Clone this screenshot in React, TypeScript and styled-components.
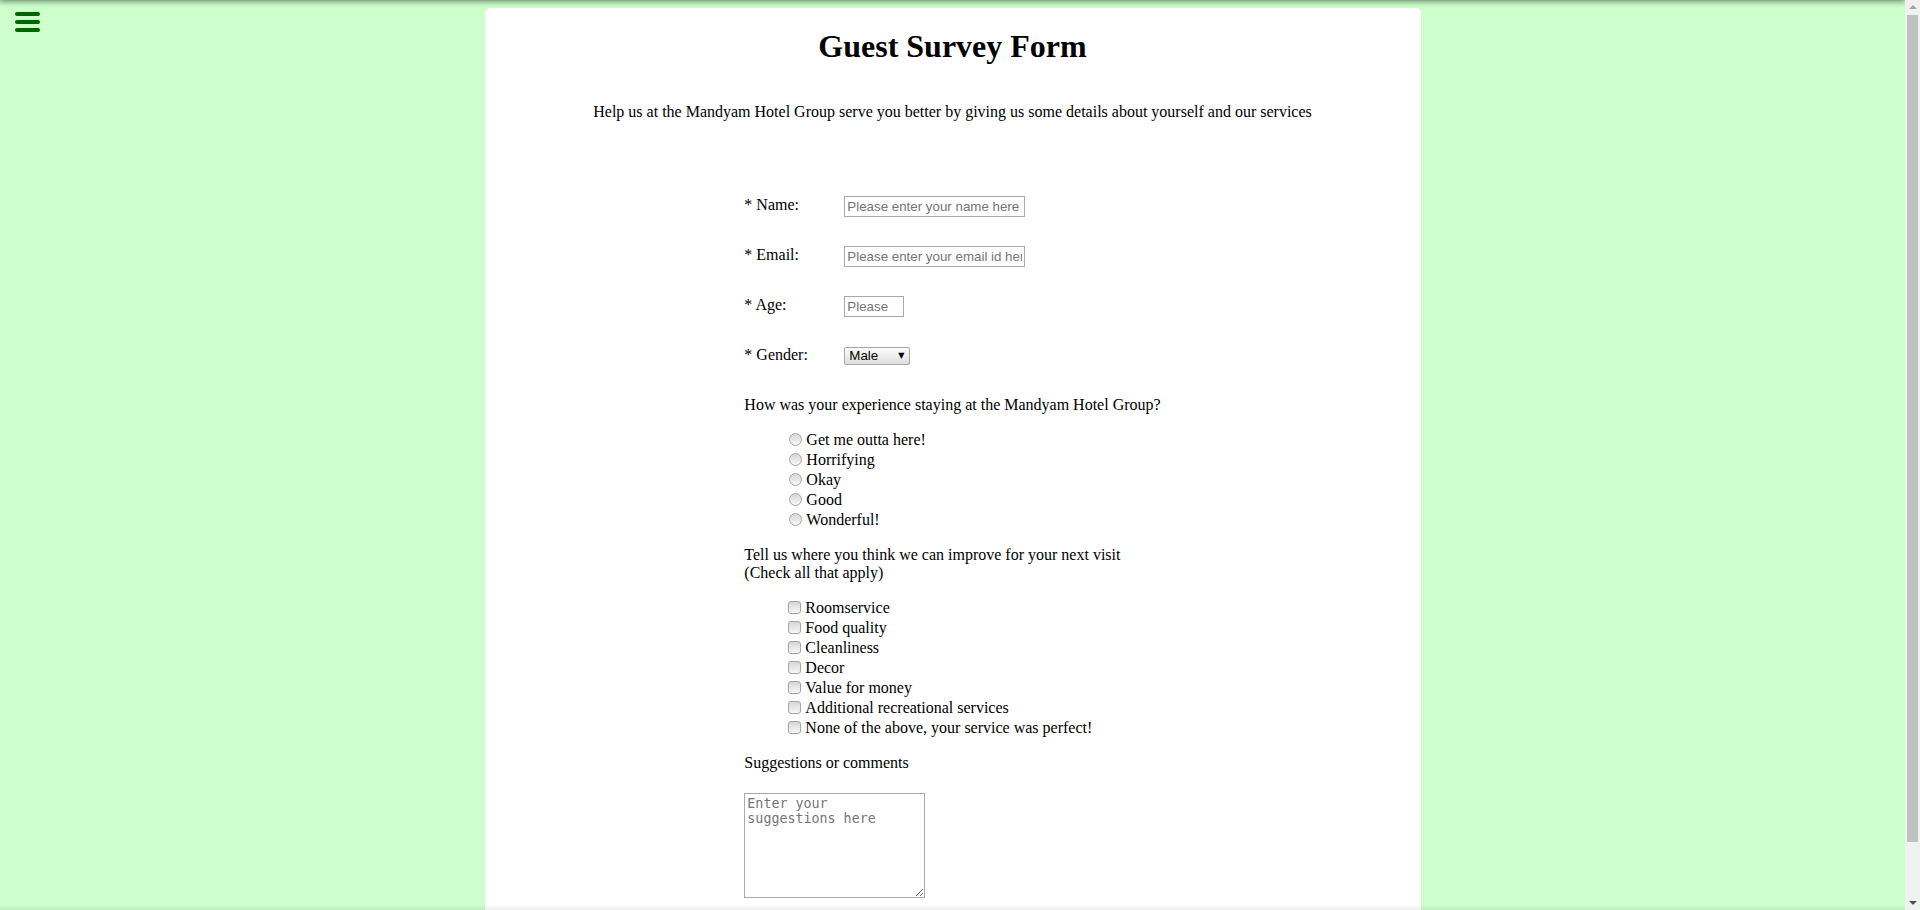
import React from "react";
import styled, { createGlobalStyle } from "styled-components";

const GlobalStyle = createGlobalStyle`
  html, body {
    margin: 0;
    padding: 0;
  }
  body {
    background: #ccffcc;
    font-family: "Liberation Serif", "Times New Roman", serif;
    font-size: 16px;
    color: #000;
  }
`;

const Page = styled.div`
  padding: 8px 0 8px;
  margin-right: 15px;
`;

const TopShade = styled.div`
  position: fixed;
  top: -10px;
  left: 0;
  right: 15px;
  height: 10px;
  box-shadow: 0 0 6px 1px rgba(0, 0, 0, 0.55);
  z-index: 10;
`;

const BottomShade = styled.div`
  position: fixed;
  bottom: 0;
  left: 0;
  right: 15px;
  height: 4px;
  background: linear-gradient(to bottom, rgba(0, 0, 0, 0.02), rgba(0, 0, 0, 0.07));
  z-index: 10;
  pointer-events: none;
`;

const ScrollBar = styled.div`
  position: fixed;
  top: 0;
  right: 0;
  bottom: 0;
  width: 15px;
  background: #f1f1f1;
  display: flex;
  flex-direction: column;
  z-index: 12;
`;

const ScrollButton = styled.div`
  flex: none;
  height: 14px;
  display: flex;
  align-items: center;
  justify-content: center;
`;

const ScrollTrack = styled.div`
  flex: 1;
  padding: 1px 2px;
`;

const ScrollThumb = styled.div`
  height: 827px;
  background: #c1c1c1;
`;

const MenuButton = styled.button`
  position: fixed;
  top: 10px;
  left: 13px;
  padding: 0;
  margin: 0;
  border: none;
  background: transparent;
  cursor: pointer;
  line-height: 0;
  z-index: 11;
`;

const Card = styled.main`
  width: 936px;
  margin: 0 auto;
  background: #fff;
  border-radius: 5px;
  padding: 20px 0 60px;
  box-sizing: border-box;
`;

const Title = styled.h1`
  margin: 0;
  text-align: center;
  font-size: 32px;
  font-weight: bold;
`;

const Subtitle = styled.p`
  margin: 38px 0 0;
  text-align: center;
`;

const Form = styled.form`
  width: fit-content;
  margin: 75px auto 0;
`;

const Field = styled.div`
  display: flex;
  align-items: flex-start;
  height: 50px;
`;

const FieldLabel = styled.label`
  width: 100px;
  flex: none;
`;

const TextInput = styled.input<{ $w: number }>`
  margin: 0;
  width: ${(p) => p.$w}px;
  height: 21px;
  padding: 1px 2px;
  box-sizing: border-box;
  border: 1px solid #a9a9a9;
  border-radius: 0;
  background: #fff;
  font-family: "Liberation Sans", Arial, sans-serif;
  font-size: 13.333px;
  color: #000;
  outline: none;

  &::placeholder {
    color: #757575;
  }
`;

const SelectWrap = styled.span`
  position: relative;
  display: inline-block;
  margin-top: 1px;
  line-height: 0;

  &::after {
    content: "▼";
    position: absolute;
    right: 6px;
    top: 4px;
    font-family: "DejaVu Sans", sans-serif;
    font-size: 8px;
    line-height: 9px;
    color: #000;
    pointer-events: none;
  }
`;

const Select = styled.select`
  appearance: none;
  -webkit-appearance: none;
  width: 66px;
  height: 18px;
  margin: 0;
  padding: 0 0 0 4px;
  box-sizing: border-box;
  border: 1px solid #a6a6a6;
  border-radius: 2px;
  background: linear-gradient(to bottom, #fdfdfd, #dedede);
  font-family: "Liberation Sans", Arial, sans-serif;
  font-size: 13.333px;
  line-height: 16px;
  color: #000;
  outline: none;
`;

const Question = styled.p`
  margin: 0;
`;

const OptionList = styled.ul`
  list-style: none;
  margin: 16px 0;
  padding: 0 0 0 40px;
`;

const OptionItem = styled.li`
  height: 20px;
  line-height: 20px;
  display: flex;
  align-items: center;
`;

const OptionLabel = styled.label`
  display: flex;
  align-items: center;
`;

const Radio = styled.input`
  appearance: none;
  -webkit-appearance: none;
  flex: none;
  width: 13px;
  height: 13px;
  margin: -2px 4px 0 5px;
  box-sizing: border-box;
  border: 1px solid #a4a4a4;
  border-radius: 50%;
  background: linear-gradient(to bottom, #d6d6d6, #f7f7f7);
`;

const Check = styled.input`
  appearance: none;
  -webkit-appearance: none;
  flex: none;
  width: 13px;
  height: 13px;
  margin: -2px 4px 0 4px;
  box-sizing: border-box;
  border: 1px solid #a4a4a4;
  border-radius: 3px;
  background: linear-gradient(to bottom, #d6d6d6, #f7f7f7);
`;

const Comments = styled.textarea`
  display: block;
  margin: 21px 0 0;
  width: 181px;
  height: 105px;
  padding: 2px;
  box-sizing: border-box;
  border: 1px solid #a9a9a9;
  border-radius: 0;
  font-family: "DejaVu Sans Mono", "Liberation Mono", monospace;
  font-size: 13.333px;
  outline: none;

  &::placeholder {
    color: #757575;
  }
`;

const experience = ["Get me outta here!", "Horrifying", "Okay", "Good", "Wonderful!"];
const improvements = [
  "Roomservice",
  "Food quality",
  "Cleanliness",
  "Decor",
  "Value for money",
  "Additional recreational services",
  "None of the above, your service was perfect!",
];

function MenuIcon() {
  return (
    <svg width="29" height="24" viewBox="0 0 29 24" aria-hidden="true">
      <g stroke="#006400" strokeWidth="4" strokeLinecap="round">
        <line x1="4" y1="4" x2="25" y2="4" />
        <line x1="4" y1="12" x2="25" y2="12" />
        <line x1="4" y1="20" x2="25" y2="20" />
      </g>
    </svg>
  );
}

function ArrowIcon({ up, color }: { up: boolean; color: string }) {
  return (
    <svg width="8" height="4" viewBox="0 0 8 4" aria-hidden="true">
      <polygon points={up ? "0,4 8,4 4,0" : "0,0 8,0 4,4"} fill={color} />
    </svg>
  );
}

export default function App() {
  return (
    <>
      <GlobalStyle />
      <TopShade />
      <MenuButton aria-label="Menu">
        <MenuIcon />
      </MenuButton>
      <Page>
        <Card>
          <Title>Guest Survey Form</Title>
          <Subtitle>
            Help us at the Mandyam Hotel Group serve you better by giving us some details about yourself and our services
          </Subtitle>
          <Form onSubmit={(e) => e.preventDefault()}>
            <Field>
              <FieldLabel htmlFor="name">* Name:</FieldLabel>
              <TextInput id="name" type="text" $w={181} placeholder="Please enter your name here" />
            </Field>
            <Field>
              <FieldLabel htmlFor="email">* Email:</FieldLabel>
              <TextInput id="email" type="email" $w={181} placeholder="Please enter your email id here" />
            </Field>
            <Field>
              <FieldLabel htmlFor="age">* Age:</FieldLabel>
              <TextInput id="age" type="text" $w={60} placeholder="Please" />
            </Field>
            <Field>
              <FieldLabel htmlFor="gender">* Gender:</FieldLabel>
              <SelectWrap>
                <Select id="gender" defaultValue="Male">
                  <option>Male</option>
                  <option>Female</option>
                  <option>Other</option>
                </Select>
              </SelectWrap>
            </Field>
            <Question>How was your experience staying at the Mandyam Hotel Group?</Question>
            <OptionList>
              {experience.map((e) => (
                <OptionItem key={e}>
                  <OptionLabel>
                    <Radio type="radio" name="experience" value={e} />
                    {e}
                  </OptionLabel>
                </OptionItem>
              ))}
            </OptionList>
            <Question>
              Tell us where you think we can improve for your next visit
              <br />
              (Check all that apply)
            </Question>
            <OptionList>
              {improvements.map((i) => (
                <OptionItem key={i}>
                  <OptionLabel>
                    <Check type="checkbox" value={i} />
                    {i}
                  </OptionLabel>
                </OptionItem>
              ))}
            </OptionList>
            <Question>Suggestions or comments</Question>
            <Comments placeholder="Enter your suggestions here" />
          </Form>
        </Card>
      </Page>
      <BottomShade />
      <ScrollBar aria-hidden="true">
        <ScrollButton>
          <ArrowIcon up color="#a3a3a3" />
        </ScrollButton>
        <ScrollTrack>
          <ScrollThumb />
        </ScrollTrack>
        <ScrollButton>
          <ArrowIcon up={false} color="#505050" />
        </ScrollButton>
      </ScrollBar>
    </>
  );
}
